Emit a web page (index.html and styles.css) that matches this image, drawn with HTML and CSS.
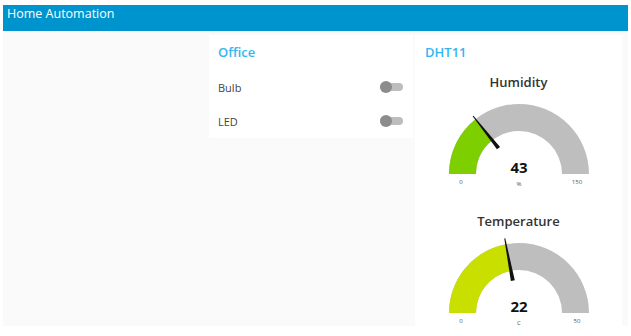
FILE: index.html
```html
<!DOCTYPE html>
<html lang="en">
<head>
    <meta charset="UTF-8">
    <meta name="viewport" content="width=device-width, initial-scale=1.0">
    <title>Home Automation</title>
    <link rel="stylesheet" href="styles.css">
</head>
<body>
    <div class="page">
        <header class="toolbar">Home Automation</header>
        <main class="content">
            <section class="group office">
                <h2 class="group-title">Office</h2>
                <div class="row">
                    <span>Bulb</span>
                    <span class="switch"><span class="thumb"></span></span>
                </div>
                <div class="row">
                    <span>LED</span>
                    <span class="switch"><span class="thumb"></span></span>
                </div>
            </section>

            <section class="group dht">
                <h2 class="group-title">DHT11</h2>

                <div class="gauge">
                    <div class="gauge-title">Humidity</div>
                    <svg class="gauge-svg" width="207" height="121" viewBox="0 0 207 121">
                        <path class="track" d="M34 83 A70 70 0 0 1 174 83 L147 83 A43 43 0 0 0 61 83 Z"/>
                        <path fill="#7ecf00" d="M34 83 A70 70 0 0 1 60.52 28.13 L77.29 49.30 A43 43 0 0 0 61 83 Z"/>
                        <polygon class="needle" points="58.43,24.69 57.65,25.31 81.93,58.37 85.07,55.89"/>
                        <text class="value" x="104" y="82">43</text>
                        <text class="unit" x="104" y="95">%</text>
                        <text class="limit" x="46" y="93">0</text>
                        <text class="limit" x="162" y="93">150</text>
                    </svg>
                </div>

                <div class="gauge">
                    <div class="gauge-title">Temperature</div>
                    <svg class="gauge-svg" width="207" height="121" viewBox="0 0 207 121">
                        <path class="track" d="M34 83 A70 70 0 0 1 174 83 L147 83 A43 43 0 0 0 61 83 Z"/>
                        <path fill="#c9df00" d="M34 83 A70 70 0 0 1 90.88 14.24 L95.94 40.76 A43 43 0 0 0 61 83 Z"/>
                        <polygon class="needle" points="90.25,8.26 89.27,8.44 95.86,50.95 99.78,50.21"/>
                        <text class="value" x="104" y="82">22</text>
                        <text class="unit" x="104" y="95">C</text>
                        <text class="limit" x="46" y="93">0</text>
                        <text class="limit" x="162" y="93">50</text>
                    </svg>
                </div>
            </section>
        </main>
    </div>
</body>
</html>
```

FILE: styles.css
```css
* {
    margin: 0;
    padding: 0;
    box-sizing: border-box;
    font-family: 'Open Sans', 'Noto Sans', sans-serif;
}

body {
    background: white;
}

.page {
    margin: 5px 3px 0 3px;
    width: 625px;
    height: 321px;
    display: flex;
    flex-direction: column;
    overflow: hidden;
}

.toolbar {
    height: 26px;
    background: #0094ce;
    color: white;
    font-size: 12.5px;
    line-height: 15px;
    padding: 1px 4px 0;
}

.content {
    flex: 1;
    background: #fafafa;
    display: flex;
    align-items: flex-start;
    gap: 2px;
    padding: 4px 5px 0 206px;
    overflow: hidden;
}

.group {
    background: white;
    padding-top: 8px;
}

.group-title {
    color: #33b6f2;
    font-size: 13px;
    font-weight: 600;
    line-height: 18px;
}

.office {
    width: 204px;
    padding-left: 9px;
    padding-right: 10px;
}

.office .group-title {
    margin-bottom: 9px;
}

.row {
    height: 34px;
    display: flex;
    align-items: center;
    justify-content: space-between;
    font-size: 11px;
    color: #444;
}

.switch {
    position: relative;
    width: 23px;
    height: 8px;
    border-radius: 4px;
    background: #bdbdbd;
}

.switch .thumb {
    position: absolute;
    left: 0;
    top: -2px;
    width: 12px;
    height: 12px;
    border-radius: 50%;
    background: #8c8c8c;
}

.dht {
    width: 207px;
    height: 400px;
}

.dht .group-title {
    padding-left: 10px;
    margin-bottom: 12px;
}

.gauge-title {
    text-align: center;
    font-size: 13px;
    font-weight: 600;
    line-height: 18px;
    color: #333;
}

.gauge-svg {
    display: block;
}

.track {
    fill: #bebebe;
}

.needle {
    fill: #111;
}

.gauge-svg text {
    text-anchor: middle;
    fill: #555;
}

.gauge-svg .value {
    font-size: 15px;
    font-weight: 700;
    fill: #111;
}

.gauge-svg .unit,
.gauge-svg .limit {
    font-size: 6px;
}
```
